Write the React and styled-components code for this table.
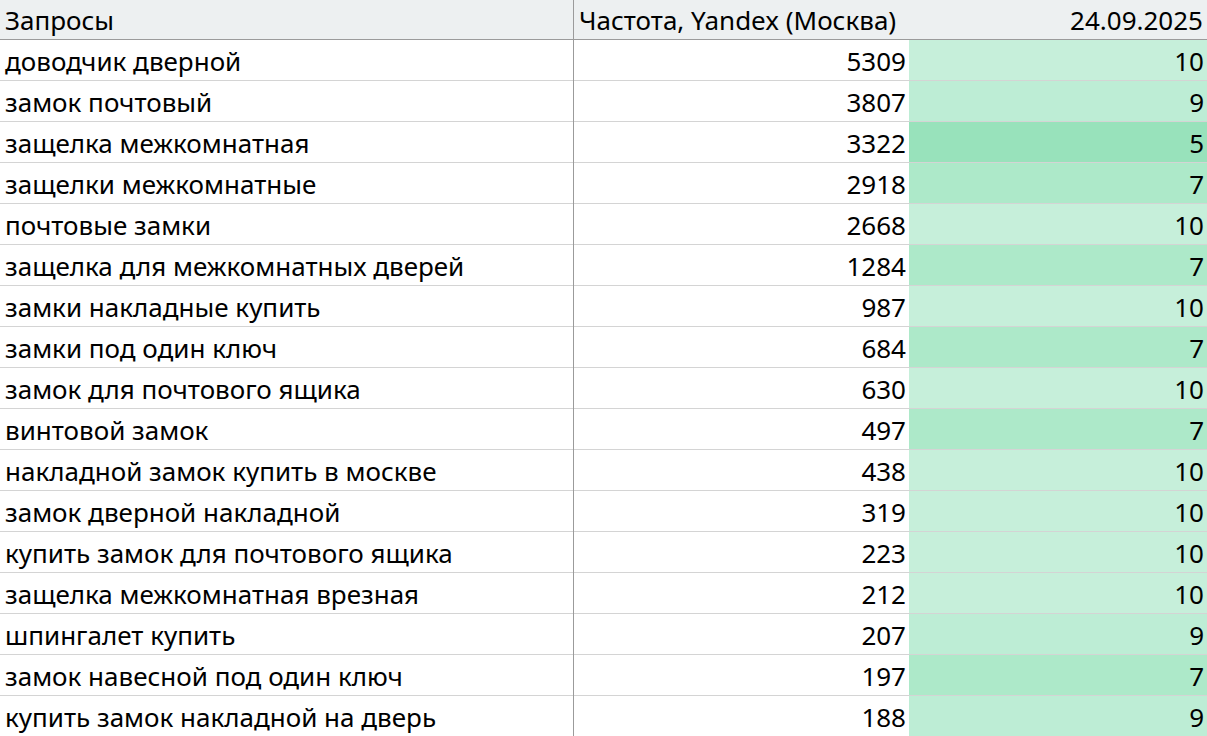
import React from 'react';
import styled, { createGlobalStyle } from 'styled-components';

const rows = [
  ['доводчик дверной', 5309, 10],
  ['замок почтовый', 3807, 9],
  ['защелка межкомнатная', 3322, 5],
  ['защелки межкомнатные', 2918, 7],
  ['почтовые замки', 2668, 10],
  ['защелка для межкомнатных дверей', 1284, 7],
  ['замки накладные купить', 987, 10],
  ['замки под один ключ', 684, 7],
  ['замок для почтового ящика', 630, 10],
  ['винтовой замок', 497, 7],
  ['накладной замок купить в москве', 438, 10],
  ['замок дверной накладной', 319, 10],
  ['купить замок для почтового ящика', 223, 10],
  ['защелка межкомнатная врезная', 212, 10],
  ['шпингалет купить', 207, 9],
  ['замок навесной под один ключ', 197, 7],
  ['купить замок накладной на дверь', 188, 9],
];

const shades = {
  10: '#c6efda',
  9: '#bdedd5',
  7: '#ade9c9',
  5: '#98e2bb',
};

const GlobalStyle = createGlobalStyle`
  body {
    margin: 0;
    background: #fff;
    font-family: "Noto Sans", "Open Sans", sans-serif;
    color: #000;
  }
`;

const Grid = styled.div`
  display: grid;
  grid-template-columns: 573px 1px 335px 1fr;
  width: 1207px;
`;

const HeadCell = styled.div`
  height: 39px;
  background: #edf0f1;
  border-bottom: 1px solid #9b9b9b;
  font-size: 26px;
  line-height: 40px;
  padding: 0 ${p => (p.$right ? '4px' : '0')} 0 ${p => (p.$right ? '0' : '5px')};
  text-align: ${p => (p.$right ? 'right' : 'left')};
  white-space: nowrap;
`;

const Divider = styled.div`
  background: #9b9b9b;
`;

const Cell = styled.div`
  height: 40px;
  border-bottom: 1px solid #d4d4d4;
  background: ${p => p.$bg || '#fff'};
  font-size: 26px;
  line-height: 43px;
  padding: 0 ${p => (p.$right ? '3px' : '0')} 0 ${p => (p.$right ? '0' : '5px')};
  text-align: ${p => (p.$right ? 'right' : 'left')};
  white-space: nowrap;
`;

export default function App() {
  return (
    <>
      <GlobalStyle />
      <Grid>
        <HeadCell>Запросы</HeadCell>
        <Divider />
        <HeadCell>Частота, Yandex (Москва)</HeadCell>
        <HeadCell $right>24.09.2025</HeadCell>
        {rows.map(([q, freq, pos]) => (
          <React.Fragment key={q}>
            <Cell>{q}</Cell>
            <Divider />
            <Cell $right>{freq}</Cell>
            <Cell $right $bg={shades[pos]}>{pos}</Cell>
          </React.Fragment>
        ))}
      </Grid>
    </>
  );
}
